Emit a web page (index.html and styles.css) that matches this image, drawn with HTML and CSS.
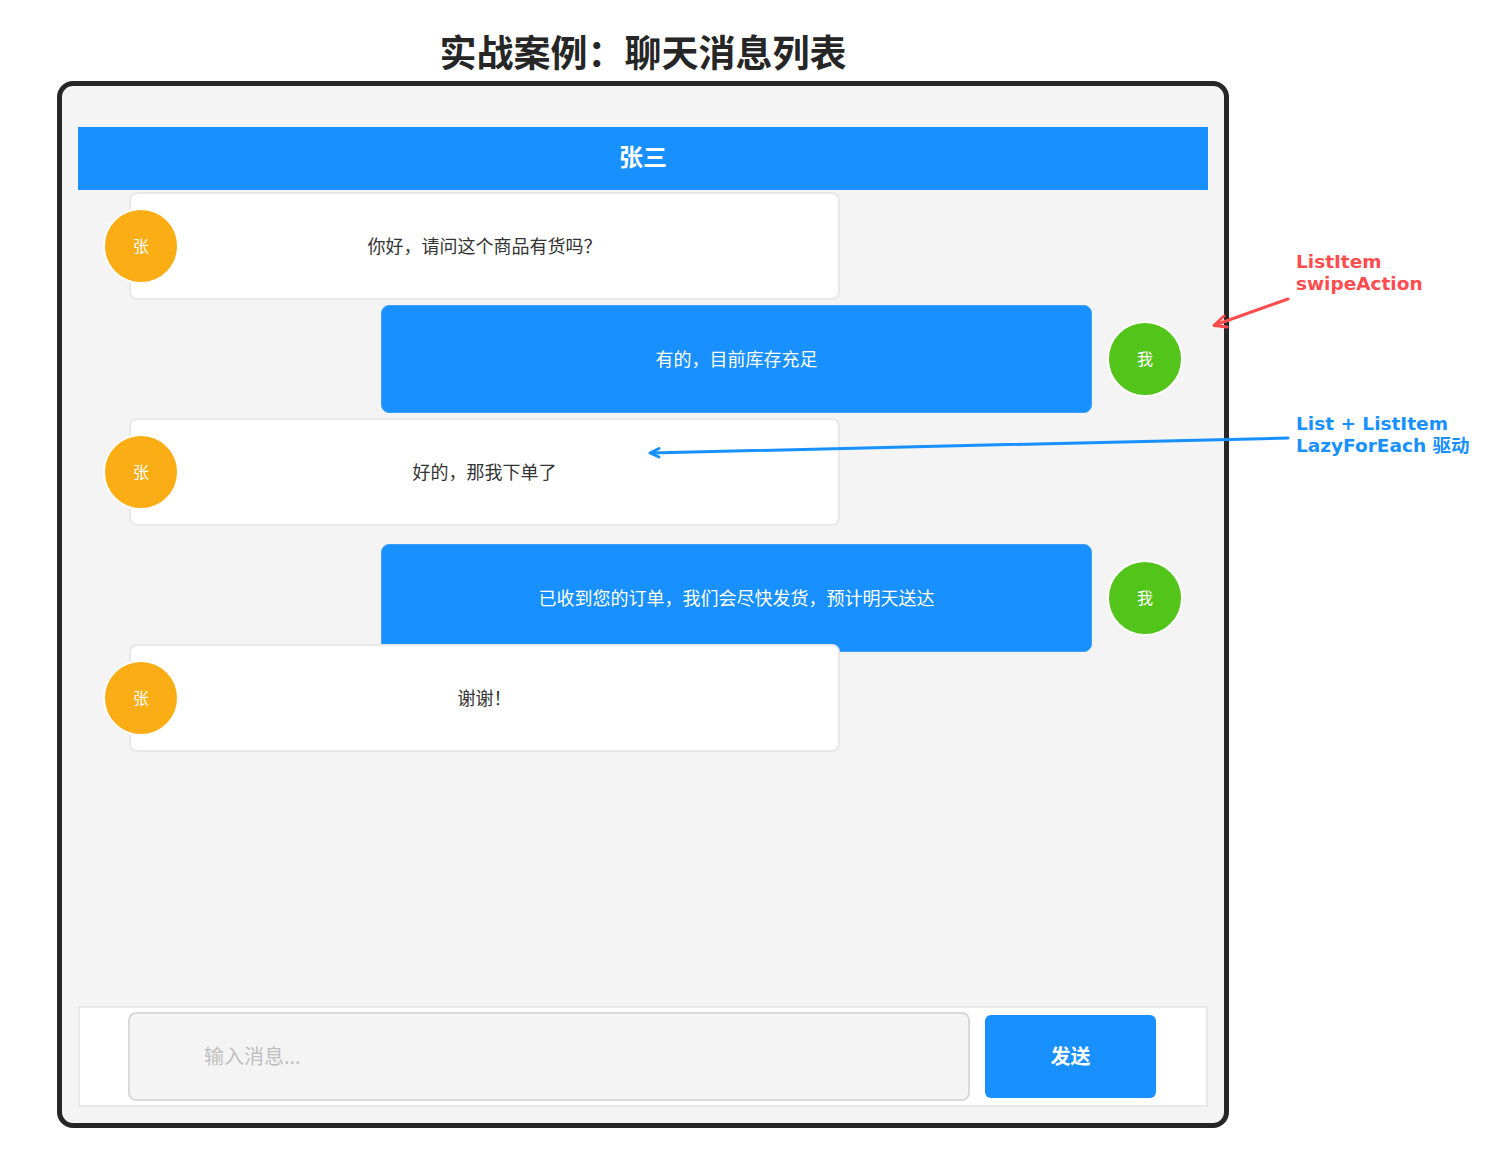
FILE: index.html
```html
<!DOCTYPE html>
<html lang="zh-CN">

<head>
    <meta charset="UTF-8">
    <meta name="viewport" content="width=device-width, initial-scale=1.0">
    <title>实战案例：聊天消息列表</title>
    <link rel="stylesheet" href="styles.css">
</head>

<body>
    <div class="stage">
        <div class="demo">
            <h1 class="demo-title">实战案例：聊天消息列表</h1>

            <!-- 手机框 -->
            <div class="phone">
                <div class="chat-header">张三</div>

                <div class="chat-list">
                    <div class="msg-row incoming">
                        <div class="avatar avatar-other">张</div>
                        <div class="bubble bubble-other">你好，请问这个商品有货吗？</div>
                    </div>
                    <div class="msg-row outgoing gap-s">
                        <div class="bubble bubble-me">有的，目前库存充足</div>
                        <div class="avatar avatar-me">我</div>
                    </div>
                    <div class="msg-row incoming gap-s">
                        <div class="avatar avatar-other">张</div>
                        <div class="bubble bubble-other">好的，那我下单了</div>
                    </div>
                    <div class="msg-row outgoing gap-l">
                        <div class="bubble bubble-me">已收到您的订单，我们会尽快发货，预计明天送达</div>
                        <div class="avatar avatar-me">我</div>
                    </div>
                    <div class="msg-row incoming overlap">
                        <div class="avatar avatar-other">张</div>
                        <div class="bubble bubble-other">谢谢！</div>
                    </div>
                </div>

                <!-- 输入栏 -->
                <div class="input-bar">
                    <div class="input-box">输入消息...</div>
                    <button class="send-btn">发送</button>
                </div>
            </div>
        </div>

        <!-- 标注 -->
        <div class="note note-red">ListItem<br>swipeAction</div>
        <div class="note note-blue">List + ListItem<br>LazyForEach 驱动</div>

        <svg class="arrows" width="1486" height="1159" viewBox="0 0 1486 1159">
            <g fill="none" stroke-width="3" stroke-linecap="round" stroke-linejoin="round">
                <line x1="1288" y1="299" x2="1215" y2="325" stroke="#ff4d4f" />
                <polyline points="1224,316 1214,325.5 1227,327" stroke="#ff4d4f" />
                <line x1="1288" y1="438" x2="651" y2="453" stroke="#1890ff" />
                <polyline points="659,448.5 650,453 659,457" stroke="#1890ff" />
            </g>
        </svg>
    </div>
</body>

</html>
```

FILE: styles.css
```css
/* 页面整体 */
body {
    margin: 0;
    background-color: #ffffff;
    font-family: "Noto Sans CJK SC", "Noto Sans", sans-serif;
}

.stage {
    position: relative;
    width: 1486px;
    height: 1159px;
    overflow: hidden;
}

.demo {
    width: 1172px;
    margin-left: 57px;
    padding-top: 28px;
}

.demo-title {
    margin: 0 0 7px;
    text-align: center;
    font-size: 37px;
    line-height: 46px;
    font-weight: bold;
    color: #262626;
}

/* 手机框 */
.phone {
    box-sizing: border-box;
    width: 1172px;
    height: 1047px;
    border: 5px solid #262626;
    border-radius: 16px;
    background-color: #f4f4f4;
    padding: 41px 16px 16px;
    display: flex;
    flex-direction: column;
}

.chat-header {
    box-sizing: border-box;
    height: 63px;
    padding-bottom: 6px;
    background-color: #1890ff;
    color: #ffffff;
    font-size: 24px;
    font-weight: bold;
    display: flex;
    justify-content: center;
    align-items: center;
}

.chat-list {
    flex: 1;
    padding-top: 2px;
}

/* 消息行 */
.msg-row {
    display: flex;
    align-items: center;
    height: 108px;
}

.msg-row.incoming {
    padding-left: 25px;
}

.msg-row.outgoing {
    justify-content: flex-end;
    padding-right: 25px;
}

.gap-s {
    margin-top: 5px;
}

.gap-l {
    margin-top: 18px;
}

.overlap {
    margin-top: -8px;
    position: relative;
}

.avatar {
    box-sizing: border-box;
    width: 76px;
    height: 76px;
    padding-bottom: 2px;
    border-radius: 50%;
    border: 2px solid #ffffff;
    color: #ffffff;
    font-size: 16px;
    display: flex;
    justify-content: center;
    align-items: center;
    flex-shrink: 0;
    position: relative;
    z-index: 1;
}

.avatar-other {
    background-color: #faad14;
}

.avatar-me {
    background-color: #52c41a;
    margin-left: 15px;
}

.bubble {
    box-sizing: border-box;
    width: 711px;
    height: 108px;
    padding-bottom: 2px;
    border-radius: 8px;
    font-size: 18px;
    display: flex;
    justify-content: center;
    align-items: center;
}

.bubble-other {
    background-color: #ffffff;
    border: 2px solid #e8e8e8;
    color: #333333;
    margin-left: -50px;
}

.bubble-me {
    background-color: #1890ff;
    border: 1px solid #40a0ff;
    color: #ffffff;
}

/* 输入栏 */
.input-bar {
    box-sizing: border-box;
    height: 101px;
    background-color: #ffffff;
    border: 2px solid #e8e8e8;
    display: flex;
    align-items: center;
    padding-left: 48px;
}

.input-box {
    box-sizing: border-box;
    width: 842px;
    height: 89px;
    padding-bottom: 3px;
    border: 2px solid #d9d9d9;
    border-radius: 8px;
    background-color: #f4f4f4;
    color: #bfbfbf;
    font-size: 20px;
    display: flex;
    align-items: center;
    padding-left: 74px;
}

.send-btn {
    width: 171px;
    height: 83px;
    padding-bottom: 4px;
    margin-left: 15px;
    border: none;
    border-radius: 6px;
    background-color: #1890ff;
    color: #ffffff;
    font-family: inherit;
    font-size: 20px;
    font-weight: bold;
    cursor: pointer;
}

/* 标注文字与箭头 */
.note {
    position: absolute;
    left: 1296px;
    font-family: "DejaVu Sans", "Noto Sans CJK SC", sans-serif;
    font-size: 18.5px;
    font-weight: bold;
    line-height: 22px;
}

.note-red {
    top: 251px;
    color: #ff4d4f;
}

.note-blue {
    top: 413px;
    color: #1890ff;
}

.arrows {
    position: absolute;
    left: 0;
    top: 0;
    pointer-events: none;
}
```
